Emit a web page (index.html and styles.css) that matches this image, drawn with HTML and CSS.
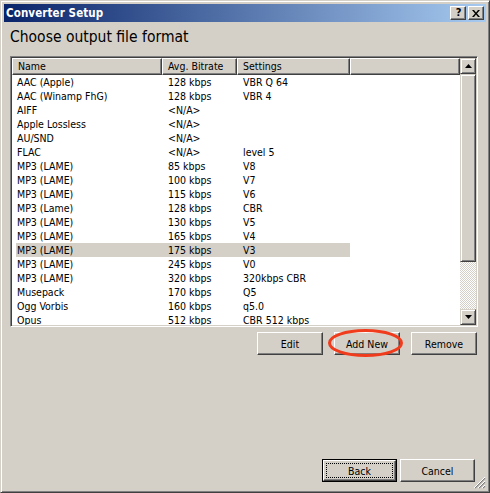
FILE: index.html
```html
<!DOCTYPE html>
<html>
<head>
<meta charset="utf-8">
<title>Converter Setup</title>
<link rel="stylesheet" href="styles.css">
</head>
<body>
<div class="window">
  <div class="titlebar">
    <span class="title">Converter Setup</span>
    <div class="caption-buttons">
      <div class="cap-btn cap-help">?</div>
      <div class="cap-btn cap-close">
        <svg width="8" height="7" viewBox="0 0 8 7"><path d="M0 0h2l2 2.5 2-2.5h2L5 3.5 8 7H6L4 4.5 2 7H0l3-3.5z" fill="#000"/></svg>
      </div>
    </div>
  </div>
  <div class="body">
    <h1 class="heading">Choose output file format</h1>
    <div class="listbox">
      <div class="list-main">
        <div class="list-header">
          <div class="hcell h-name">Name</div>
          <div class="hcell h-rate">Avg. Bitrate</div>
          <div class="hcell h-set">Settings</div>
          <div class="hcell h-fill"></div>
        </div>
        <div class="rows">
          <div class="row"><span>AAC (Apple)</span><span>128 kbps</span><span>VBR Q 64</span></div>
          <div class="row"><span>AAC (Winamp FhG)</span><span>128 kbps</span><span>VBR 4</span></div>
          <div class="row"><span>AIFF</span><span>&lt;N/A&gt;</span><span></span></div>
          <div class="row"><span>Apple Lossless</span><span>&lt;N/A&gt;</span><span></span></div>
          <div class="row"><span>AU/SND</span><span>&lt;N/A&gt;</span><span></span></div>
          <div class="row"><span>FLAC</span><span>&lt;N/A&gt;</span><span>level 5</span></div>
          <div class="row"><span>MP3 (LAME)</span><span>85 kbps</span><span>V8</span></div>
          <div class="row"><span>MP3 (LAME)</span><span>100 kbps</span><span>V7</span></div>
          <div class="row"><span>MP3 (LAME)</span><span>115 kbps</span><span>V6</span></div>
          <div class="row"><span>MP3 (Lame)</span><span>128 kbps</span><span>CBR</span></div>
          <div class="row"><span>MP3 (LAME)</span><span>130 kbps</span><span>V5</span></div>
          <div class="row"><span>MP3 (LAME)</span><span>165 kbps</span><span>V4</span></div>
          <div class="row selected"><span>MP3 (LAME)</span><span>175 kbps</span><span>V3</span></div>
          <div class="row"><span>MP3 (LAME)</span><span>245 kbps</span><span>V0</span></div>
          <div class="row"><span>MP3 (LAME)</span><span>320 kbps</span><span>320kbps CBR</span></div>
          <div class="row"><span>Musepack</span><span>170 kbps</span><span>Q5</span></div>
          <div class="row"><span>Ogg Vorbis</span><span>160 kbps</span><span>q5.0</span></div>
          <div class="row"><span>Opus</span><span>512 kbps</span><span>CBR 512 kbps</span></div>
        </div>
      </div>
      <div class="scrollbar">
        <div class="sb-btn">
          <svg width="7" height="4" viewBox="0 0 7 4"><path d="M3.5 0L7 4H0z" fill="#000"/></svg>
        </div>
        <div class="sb-thumb"></div>
        <div class="sb-track"></div>
        <div class="sb-btn">
          <svg width="7" height="4" viewBox="0 0 7 4"><path d="M0 0h7L3.5 4z" fill="#000"/></svg>
        </div>
      </div>
    </div>
    <div class="actions">
      <button class="btn">Edit</button>
      <div class="highlight-wrap">
        <button class="btn">Add New</button>
        <svg class="ring" width="78" height="31" viewBox="0 0 78 31"><ellipse cx="38.5" cy="15" rx="36" ry="12.5" fill="none" stroke="#f03c1c" stroke-width="3"/></svg>
      </div>
      <button class="btn">Remove</button>
    </div>
    <div class="spacer"></div>
    <div class="nav">
      <div class="default-frame"><button class="btn btn-default"><span class="focus">Back</span></button></div>
      <button class="btn btn-cancel">Cancel</button>
    </div>
  </div>
  <svg class="grip" width="12" height="12" viewBox="0 0 12 12">
    <path d="M11 1L1 11M11 5L5 11M11 9L9 11" stroke="#808080" stroke-width="1.2"/>
    <path d="M11 0L0 11M11 4L4 11M11 8L8 11" stroke="#fff" stroke-width="1"/>
  </svg>
</div>
</body>
</html>
```
FILE: styles.css
```css
* { box-sizing: border-box; }
html, body { margin: 0; padding: 0; background: #d4d0c8; }
body {
  font-family: "DejaVu Sans Condensed", "DejaVu Sans", sans-serif;
  font-stretch: condensed;
  font-size: 10.5px;
  color: #000;
}
.window {
  position: relative;
  width: 490px;
  height: 493px;
  background: #d4d0c8;
  border: 1px solid;
  border-color: #d4d0c8 #404040 #404040 #d4d0c8;
  box-shadow: inset 1px 1px #fff, inset -1px -1px #808080;
  padding: 3px;
  display: flex;
  flex-direction: column;
}
.titlebar {
  height: 18px;
  flex: none;
  background: linear-gradient(to right, #0a246a, #a6caf0);
  display: flex;
  align-items: center;
  justify-content: space-between;
  padding: 0 2px 0 2px;
}
.title {
  color: #fff;
  font-weight: bold;
  font-size: 11.5px;
  letter-spacing: 0.1px;
}
.caption-buttons { display: flex; gap: 2px; }
.cap-btn {
  width: 16px;
  height: 14px;
  background: #d4d0c8;
  border: 1px solid;
  border-color: #fff #404040 #404040 #fff;
  box-shadow: inset -1px -1px #808080;
  display: flex;
  align-items: center;
  justify-content: center;
}
.cap-help {
  font-family: "DejaVu Sans", sans-serif;
  font-weight: bold;
  font-size: 11px;
  line-height: 12px;
  padding-left: 1px;
}
.body {
  flex: 1;
  display: flex;
  flex-direction: column;
  padding: 0 8px 7px 6px;
}
.heading {
  margin: 5px 0 9px 0;
  font-weight: normal;
  font-size: 15.5px;
  line-height: 20px;
  height: 20px;
}
.listbox {
  height: 271px;
  flex: none;
  display: flex;
  border: 1px solid;
  border-color: #808080 #fff #fff #808080;
  box-shadow: inset 1px 1px #404040, inset -1px -1px #d4d0c8;
  padding: 1px;
  background: #fff;
}
.list-main {
  flex: 1;
  display: flex;
  flex-direction: column;
  overflow: hidden;
}
.list-header {
  display: flex;
  height: 17px;
  flex: none;
}
.hcell {
  height: 17px;
  background: #d4d0c8;
  border: 1px solid;
  border-color: #fff #404040 #404040 #fff;
  box-shadow: inset -1px -1px #808080;
  padding: 1px 0 0 5px;
  line-height: 13px;
  white-space: nowrap;
}
.h-name { width: 150px; }
.h-rate { width: 75px; }
.h-set { width: 113px; }
.h-fill { flex: 1; }
.rows {
  flex: 1;
  overflow: hidden;
  padding-left: 4px;
}
.row {
  display: grid;
  grid-template-columns: 146px 75px 113px;
  height: 14px;
  line-height: 14px;
  white-space: nowrap;
}
.row span { padding-left: 6px; overflow: hidden; }
.row span:first-child { padding-left: 1px; }
.row.selected { background: #d4d0c8; width: 334px; }
.scrollbar {
  width: 16px;
  flex: none;
  display: flex;
  flex-direction: column;
}
.sb-btn, .sb-thumb {
  background: #d4d0c8;
  border: 1px solid;
  border-color: #d4d0c8 #404040 #404040 #d4d0c8;
  box-shadow: inset 1px 1px #fff, inset -1px -1px #808080;
}
.sb-btn {
  height: 16px;
  flex: none;
  display: flex;
  align-items: center;
  justify-content: center;
}
.sb-thumb { height: 188px; flex: none; }
.sb-track {
  flex: 1;
  background: repeating-conic-gradient(#fff 0 25%, #d4d0c8 0 50%) 0 0 / 2px 2px;
}
.actions {
  display: flex;
  justify-content: flex-end;
  gap: 11px;
  margin-top: 5px;
  padding-right: 1px;
}
.btn {
  font-family: inherit;
  font-stretch: condensed;
  font-size: 10.5px;
  color: #000;
  background: #d4d0c8;
  width: 66px;
  height: 23px;
  border: 1px solid;
  border-color: #fff #404040 #404040 #fff;
  box-shadow: inset -1px -1px #808080;
  padding: 0;
  margin: 0;
}
.highlight-wrap { position: relative; width: 66px; height: 23px; }
.ring { position: absolute; left: -7px; top: -4px; pointer-events: none; }
.spacer { flex: 1; }
.nav {
  display: flex;
  justify-content: flex-end;
  gap: 3px;
  padding-right: 3px;
}
.default-frame {
  border: 1px solid #000;
  width: 75px;
  height: 23px;
}
.btn-default {
  width: 73px;
  height: 21px;
  display: flex;
  align-items: center;
  justify-content: center;
  padding: 3px;
}
.focus {
  display: flex;
  align-items: center;
  justify-content: center;
  width: 100%;
  height: 100%;
  outline: 1px dotted #000;
}
.btn-cancel { width: 75px; }
.grip { position: absolute; right: 3px; bottom: 3px; }
```
